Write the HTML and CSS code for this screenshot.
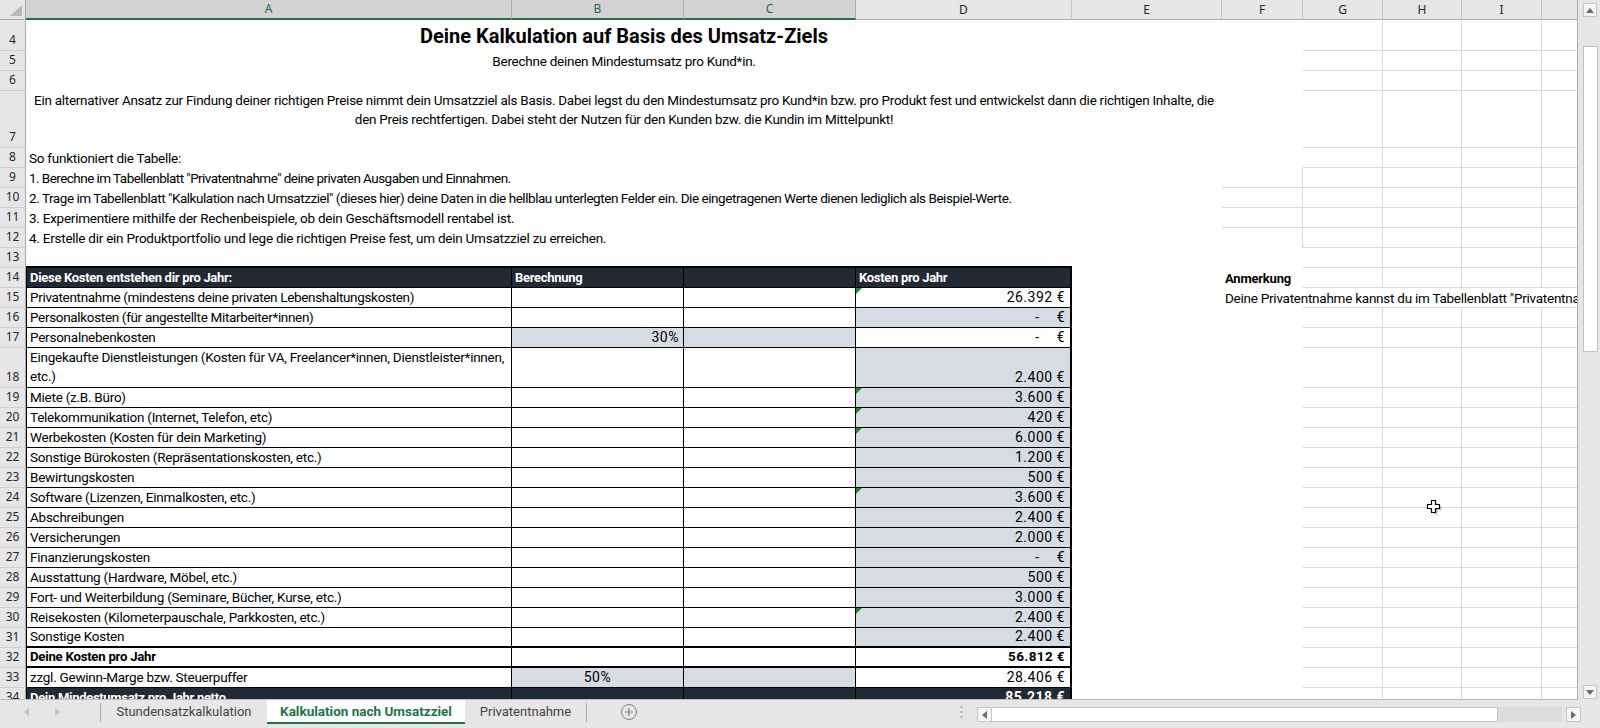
FILE: index.html
```html
<!DOCTYPE html>
<html lang="de">
<head>
<meta charset="utf-8">
<title>Kalkulation nach Umsatzziel</title>
<link rel="stylesheet" href="styles.css">
</head>
<body>
<div class="app">
  <div class="main">
    <div class="grid-wrap">
      <table class="sheet">
        <colgroup>
          <col class="c-rh"><col class="c-a"><col class="c-b"><col class="c-c"><col class="c-d"><col class="c-e"><col class="c-f"><col class="c-g"><col class="c-h"><col class="c-i"><col class="c-j">
        </colgroup>
        <tr class="hdr">
          <th class="corner"></th>
          <th class="ch sel">A</th><th class="ch sel">B</th><th class="ch sel">C</th>
          <th class="ch">D</th><th class="ch">E</th><th class="ch">F</th><th class="ch">G</th><th class="ch">H</th><th class="ch">I</th><th class="ch"></th>
        </tr>
        <tr class="r31">
          <th class="rh">4</th>
          <td class="w title" colspan="5">Deine Kalkulation auf Basis des Umsatz-Ziels</td>
          <td class="w"></td><td class="g"></td><td class="g"></td><td class="g"></td><td class="g"></td>
        </tr>
        <tr class="r20">
          <th class="rh">5</th>
          <td class="w ctr" colspan="5">Berechne deinen Mindestumsatz pro Kund*in.</td>
          <td class="w"></td><td class="g"></td><td class="g"></td><td class="g"></td><td class="g"></td>
        </tr>
        <tr class="r20">
          <th class="rh">6</th>
          <td class="w" colspan="5"></td>
          <td class="w"></td><td class="g"></td><td class="g"></td><td class="g"></td><td class="g"></td>
        </tr>
        <tr class="r57">
          <th class="rh">7</th>
          <td class="w para" colspan="5">Ein alternativer Ansatz zur Findung deiner richtigen Preise nimmt dein Umsatzziel als Basis. Dabei legst du den Mindestumsatz pro Kund*in bzw. pro Produkt fest und entwickelst dann die richtigen Inhalte, die<br>den Preis rechtfertigen. Dabei steht der Nutzen für den Kunden bzw. die Kundin im Mittelpunkt!</td>
          <td class="w"></td><td class="g"></td><td class="g"></td><td class="g"></td><td class="g"></td>
        </tr>
        <tr class="r20">
          <th class="rh">8</th>
          <td class="w" colspan="5">So funktioniert die Tabelle:</td>
          <td class="w"></td><td class="g"></td><td class="g"></td><td class="g"></td><td class="g"></td>
        </tr>
        <tr class="r20">
          <th class="rh">9</th>
          <td class="w tight1" colspan="5">1. Berechne im Tabellenblatt "Privatentnahme" deine privaten Ausgaben und Einnahmen.</td>
          <td class="g"></td><td class="g"></td><td class="g"></td><td class="g"></td><td class="g"></td>
        </tr>
        <tr class="r20">
          <th class="rh">10</th>
          <td class="w tight2" colspan="5">2. Trage im Tabellenblatt "Kalkulation nach Umsatzziel" (dieses hier) deine Daten in die hellblau unterlegten Felder ein. Die eingetragenen Werte dienen lediglich als Beispiel-Werte.</td>
          <td class="g"></td><td class="g"></td><td class="g"></td><td class="g"></td><td class="g"></td>
        </tr>
        <tr class="r20">
          <th class="rh">11</th>
          <td class="w" colspan="5">3. Experimentiere mithilfe der Rechenbeispiele, ob dein Geschäftsmodell rentabel ist.</td>
          <td class="g"></td><td class="g"></td><td class="g"></td><td class="g"></td><td class="g"></td>
        </tr>
        <tr class="r20">
          <th class="rh">12</th>
          <td class="w" colspan="5">4. Erstelle dir ein Produktportfolio und lege die richtigen Preise fest, um dein Umsatzziel zu erreichen.</td>
          <td class="gr"></td><td class="g"></td><td class="g"></td><td class="g"></td><td class="g"></td>
        </tr>
        <tr class="r20">
          <th class="rh">13</th>
          <td class="w topline" colspan="4"></td>
          <td class="w"></td><td class="w"></td><td class="g"></td><td class="g"></td><td class="g"></td><td class="g"></td>
        </tr>
        <tr class="r20">
          <th class="rh">14</th>
          <td class="t a hd">Diese Kosten entstehen dir pro Jahr:</td>
          <td class="t hd">Berechnung</td>
          <td class="t hd"></td>
          <td class="t d hd l">Kosten pro Jahr</td>
          <td class="w"></td><td class="w note-h">Anmerkung</td><td class="g"></td><td class="g"></td><td class="g"></td><td class="g"></td>
        </tr>
        <tr class="r20">
          <th class="rh">15</th>
          <td class="t a tight0">Privatentnahme (mindestens deine privaten Lebenshaltungskosten)</td>
          <td class="t"></td><td class="t"></td>
          <td class="t d num tri">26.392 €</td>
          <td class="w"></td><td class="w ovf">Deine Privatentnahme kannst du im Tabellenblatt "Privatentnahme" berechnen.</td><td class="gb"></td><td class="gb"></td><td class="gb"></td><td class="gb"></td>
        </tr>
        <tr class="r20">
          <th class="rh">16</th>
          <td class="t a tight0">Personalkosten (für angestellte Mitarbeiter*innen)</td>
          <td class="t"></td><td class="t"></td>
          <td class="t d num fill"><span class="dash">-</span>€</td>
          <td class="w"></td><td class="w"></td><td class="g"></td><td class="g"></td><td class="g"></td><td class="g"></td>
        </tr>
        <tr class="r20">
          <th class="rh">17</th>
          <td class="t a">Personalnebenkosten</td>
          <td class="t fill num r">30%</td><td class="t fill"></td>
          <td class="t d num"><span class="dash">-</span>€</td>
          <td class="w"></td><td class="w"></td><td class="g"></td><td class="g"></td><td class="g"></td><td class="g"></td>
        </tr>
        <tr class="r40">
          <th class="rh">18</th>
          <td class="t a wrap">Eingekaufte Dienstleistungen (Kosten für VA, Freelancer*innen, Dienstleister*innen,<br>etc.)</td>
          <td class="t"></td><td class="t"></td>
          <td class="t d num fill">2.400 €</td>
          <td class="w"></td><td class="w"></td><td class="g"></td><td class="g"></td><td class="g"></td><td class="g"></td>
        </tr>
        <tr class="r20">
          <th class="rh">19</th>
          <td class="t a">Miete (z.B. Büro)</td>
          <td class="t"></td><td class="t"></td>
          <td class="t d num fill tri">3.600 €</td>
          <td class="w"></td><td class="w"></td><td class="g"></td><td class="g"></td><td class="g"></td><td class="g"></td>
        </tr>
        <tr class="r20">
          <th class="rh">20</th>
          <td class="t a">Telekommunikation (Internet, Telefon, etc)</td>
          <td class="t"></td><td class="t"></td>
          <td class="t d num fill tri">420 €</td>
          <td class="w"></td><td class="w"></td><td class="g"></td><td class="g"></td><td class="g"></td><td class="g"></td>
        </tr>
        <tr class="r20">
          <th class="rh">21</th>
          <td class="t a">Werbekosten (Kosten für dein Marketing)</td>
          <td class="t"></td><td class="t"></td>
          <td class="t d num fill tri">6.000 €</td>
          <td class="w"></td><td class="w"></td><td class="g"></td><td class="g"></td><td class="g"></td><td class="g"></td>
        </tr>
        <tr class="r20">
          <th class="rh">22</th>
          <td class="t a">Sonstige Bürokosten (Repräsentationskosten, etc.)</td>
          <td class="t"></td><td class="t"></td>
          <td class="t d num fill">1.200 €</td>
          <td class="w"></td><td class="w"></td><td class="g"></td><td class="g"></td><td class="g"></td><td class="g"></td>
        </tr>
        <tr class="r20">
          <th class="rh">23</th>
          <td class="t a">Bewirtungskosten</td>
          <td class="t"></td><td class="t"></td>
          <td class="t d num fill">500 €</td>
          <td class="w"></td><td class="w"></td><td class="g"></td><td class="g"></td><td class="g"></td><td class="g"></td>
        </tr>
        <tr class="r20">
          <th class="rh">24</th>
          <td class="t a">Software (Lizenzen, Einmalkosten, etc.)</td>
          <td class="t"></td><td class="t"></td>
          <td class="t d num fill tri">3.600 €</td>
          <td class="w"></td><td class="w"></td><td class="g"></td><td class="g"></td><td class="g"></td><td class="g"></td>
        </tr>
        <tr class="r20">
          <th class="rh">25</th>
          <td class="t a">Abschreibungen</td>
          <td class="t"></td><td class="t"></td>
          <td class="t d num fill">2.400 €</td>
          <td class="w"></td><td class="w"></td><td class="g"></td><td class="g"></td><td class="g"></td><td class="g"></td>
        </tr>
        <tr class="r20">
          <th class="rh">26</th>
          <td class="t a">Versicherungen</td>
          <td class="t"></td><td class="t"></td>
          <td class="t d num fill">2.000 €</td>
          <td class="w"></td><td class="w"></td><td class="g"></td><td class="g"></td><td class="g"></td><td class="g"></td>
        </tr>
        <tr class="r20">
          <th class="rh">27</th>
          <td class="t a">Finanzierungskosten</td>
          <td class="t"></td><td class="t"></td>
          <td class="t d num fill"><span class="dash">-</span>€</td>
          <td class="w"></td><td class="w"></td><td class="g"></td><td class="g"></td><td class="g"></td><td class="g"></td>
        </tr>
        <tr class="r20">
          <th class="rh">28</th>
          <td class="t a">Ausstattung (Hardware, Möbel, etc.)</td>
          <td class="t"></td><td class="t"></td>
          <td class="t d num fill">500 €</td>
          <td class="w"></td><td class="w"></td><td class="g"></td><td class="g"></td><td class="g"></td><td class="g"></td>
        </tr>
        <tr class="r20">
          <th class="rh">29</th>
          <td class="t a">Fort- und Weiterbildung (Seminare, Bücher, Kurse, etc.)</td>
          <td class="t"></td><td class="t"></td>
          <td class="t d num fill">3.000 €</td>
          <td class="w"></td><td class="w"></td><td class="g"></td><td class="g"></td><td class="g"></td><td class="g"></td>
        </tr>
        <tr class="r20">
          <th class="rh">30</th>
          <td class="t a">Reisekosten (Kilometerpauschale, Parkkosten, etc.)</td>
          <td class="t"></td><td class="t"></td>
          <td class="t d num fill tri">2.400 €</td>
          <td class="w"></td><td class="w"></td><td class="g"></td><td class="g"></td><td class="g"></td><td class="g"></td>
        </tr>
        <tr class="r20">
          <th class="rh">31</th>
          <td class="t a bb2">Sonstige Kosten</td>
          <td class="t bb2"></td><td class="t bb2"></td>
          <td class="t d num fill bb2">2.400 €</td>
          <td class="w"></td><td class="w"></td><td class="g"></td><td class="g"></td><td class="g"></td><td class="g"></td>
        </tr>
        <tr class="r20">
          <th class="rh">32</th>
          <td class="t a bb2 strong">Deine Kosten pro Jahr</td>
          <td class="t bb2"></td><td class="t bb2"></td>
          <td class="t d num bb2 strong">56.812 €</td>
          <td class="w"></td><td class="w"></td><td class="g"></td><td class="g"></td><td class="g"></td><td class="g"></td>
        </tr>
        <tr class="r20">
          <th class="rh">33</th>
          <td class="t a">zzgl. Gewinn-Marge bzw. Steuerpuffer</td>
          <td class="t fill num ctr">50%</td><td class="t fill"></td>
          <td class="t d num">28.406 €</td>
          <td class="w"></td><td class="w"></td><td class="g"></td><td class="g"></td><td class="g"></td><td class="g"></td>
        </tr>
        <tr class="r20">
          <th class="rh">34</th>
          <td class="t a hd">Dein Mindestumsatz pro Jahr netto</td>
          <td class="t hd"></td><td class="t hd"></td>
          <td class="t d hd num">85.218 €</td>
          <td class="w"></td><td class="w"></td><td class="g"></td><td class="g"></td><td class="g"></td><td class="g"></td>
        </tr>
      </table>
    </div>
    <div class="vscroll">
      <div class="sbtn">
        <svg width="8" height="5" viewBox="0 0 8 5"><path d="M0 5 L4 0 L8 5 Z" fill="#6b6b6b"/></svg>
      </div>
      <div class="vtrack"><div class="vthumb"></div></div>
      <div class="sbtn">
        <svg width="8" height="5" viewBox="0 0 8 5"><path d="M0 0 L8 0 L4 5 Z" fill="#6b6b6b"/></svg>
      </div>
    </div>
  </div>
  <div class="tabbar">
    <div class="nav">
      <svg class="nav-l" width="5" height="8" viewBox="0 0 5 8"><path d="M5 0 L0 4 L5 8 Z" fill="#c3c3c3"/></svg>
      <svg class="nav-r" width="5" height="8" viewBox="0 0 5 8"><path d="M0 0 L5 4 L0 8 Z" fill="#c3c3c3"/></svg>
    </div>
    <div class="sep"></div>
    <div class="tab tab1">Stundensatzkalkulation</div>
    <div class="tab tab-active">Kalkulation nach Umsatzziel</div>
    <div class="tab tab3">Privatentnahme</div>
    <div class="sep"></div>
    <div class="addbtn">
      <svg width="18" height="18" viewBox="0 0 18 18"><circle cx="9" cy="9" r="7.5" fill="none" stroke="#808080" stroke-width="1"/><path d="M9 5 V13 M5 9 H13" stroke="#808080" stroke-width="1.2"/></svg>
    </div>
    <div class="dots">
      <svg width="3" height="14" viewBox="0 0 3 14"><rect x="0.5" y="1" width="2" height="2" fill="#b0b0b0"/><rect x="0.5" y="6" width="2" height="2" fill="#b0b0b0"/><rect x="0.5" y="11" width="2" height="2" fill="#b0b0b0"/></svg>
    </div>
    <div class="hscroll">
      <div class="sbtn hb">
        <svg width="5" height="8" viewBox="0 0 5 8"><path d="M5 0 L0 4 L5 8 Z" fill="#6b6b6b"/></svg>
      </div>
      <div class="hthumb"></div>
      <div class="htrack"></div>
      <div class="sbtn hb">
        <svg width="5" height="8" viewBox="0 0 5 8"><path d="M0 0 L5 4 L0 8 Z" fill="#6b6b6b"/></svg>
      </div>
    </div>
  </div>
  <svg class="cursor" width="17" height="17" viewBox="0 0 17 17">
    <path d="M6.5 2.5 H10.5 V6.5 H14.5 V10.5 H10.5 V14.5 H6.5 V10.5 H2.5 V6.5 H6.5 Z" fill="#555" opacity="0.35" transform="translate(1,1)"/>
    <path d="M5.5 1.5 H9.5 V5.5 H13.5 V9.5 H9.5 V13.5 H5.5 V9.5 H1.5 V5.5 H5.5 Z" fill="#fff" stroke="#000" stroke-width="1.2" stroke-linejoin="round"/>
  </svg>
</div>
</body>
</html>
```

FILE: styles.css
```css
* { box-sizing: border-box; }
html, body { margin: 0; padding: 0; }
body {
  width: 1600px;
  height: 728px;
  overflow: hidden;
  background: #e6e6e6;
  font-family: Roboto, "Liberation Sans", Arial, sans-serif;
  color: #000;
}
.app {
  position: relative;
  display: flex;
  flex-direction: column;
  width: 1600px;
  height: 728px;
}
.main {
  display: flex;
  height: 700px;
}
.grid-wrap {
  width: 1578px;
  height: 700px;
  overflow: hidden;
  background: #fff;
  border-right: 1px solid #ababab;
  border-bottom: 1px solid #bdbdbd;
}

/* ---------- sheet ---------- */
.sheet {
  border-collapse: separate;
  border-spacing: 0;
  table-layout: fixed;
  width: 1578px;
}
.c-rh { width: 26px; }
.c-a { width: 486px; }
.c-b { width: 172px; }
.c-c { width: 172px; }
.c-d { width: 216px; }
.c-e { width: 150px; }
.c-f { width: 81px; }
.c-g { width: 80px; }
.c-h { width: 79px; }
.c-i { width: 80px; }
.c-j { width: 36px; }

.hdr { height: 20px; }
.r20 { height: 20px; }
.r31 { height: 31px; }
.r40 { height: 40px; }
.r57 { height: 57px; }

.corner {
  position: relative;
  background: #e6e6e6;
  border-right: 1px solid #ababab;
  border-bottom: 1px solid #ababab;
  padding: 0;
}
.corner::after {
  content: "";
  position: absolute;
  right: 3px;
  bottom: 3px;
  border-left: 12px solid transparent;
  border-bottom: 11px solid #b9b9b9;
}
.ch {
  background: #e6e6e6;
  color: #262626;
  font-family: "Noto Sans", "Open Sans", sans-serif;
  font-weight: 400;
  font-size: 12px;
  line-height: 18px;
  text-align: center;
  vertical-align: middle;
  padding: 0;
  border-right: 1px solid #c4c4c4;
  border-bottom: 1px solid #ababab;
}
.ch.sel {
  background: #d2d2d2;
  color: #1e6b3f;
  border-right-color: #ababab;
  border-bottom: 2px solid #217346;
}
.rh {
  background: #e6e6e6;
  color: #262626;
  font-family: "Noto Sans", "Open Sans", sans-serif;
  font-weight: 400;
  font-size: 12px;
  line-height: 18px;
  text-align: center;
  vertical-align: bottom;
  padding: 0 0 1px 0;
  border-right: 1px solid #ababab;
  border-bottom: 1px solid #cfcfcf;
}

.sheet td {
  padding: 0 3px 1px 3px;
  white-space: nowrap;
  overflow: hidden;
  vertical-align: bottom;
  font-size: 13.5px;
  line-height: 17px;
  letter-spacing: -0.25px;
}
.sheet td.tight0 { letter-spacing: -0.33px; }
.sheet td.tight1 { letter-spacing: -0.55px; }
.sheet td.tight2 { letter-spacing: -0.45px; }
.w { background: #fff; }
.g { border-right: 1px solid #d9d9d9; border-bottom: 1px solid #d9d9d9; }
.gb { border-bottom: 1px solid #d9d9d9; }
.gr { border-right: 1px solid #d9d9d9; }
.topline { border-bottom: 2px solid #000; }

.sheet td.title {
  font-size: 20px;
  font-weight: 700;
  letter-spacing: 0;
  text-align: center;
  line-height: 24px;
  vertical-align: middle;
  padding-bottom: 0;
}
.ctr { text-align: center; }
.r { text-align: right; }
.sheet td.para {
  white-space: normal;
  text-align: center;
  vertical-align: top;
  font-size: 13.45px;
  line-height: 19px;
  padding-top: 0;
}
.sheet td.wrap { white-space: normal; line-height: 19px; }
.sheet td.ovf { overflow: visible; }
.sheet td.note-h { font-weight: 700; font-size: 13px; letter-spacing: -0.2px; }

.t {
  background: #fff;
  border-right: 1px solid #000;
  border-bottom: 1px solid #000;
}
.t.a { border-left: 1px solid #000; }
.t.d {
  position: relative;
  border-right: 2px solid #000;
  text-align: right;
  padding-right: 5px;
}
.t.d.l { text-align: left; }
.fill { background: #d6dce4; }
.sheet td.hd {
  background: #222a35;
  color: #fff;
  font-weight: 700;
  font-size: 13px;
  letter-spacing: -0.3px;
}
.bb2 { border-bottom: 2px solid #000; }
.sheet td.num { font-size: 14px; letter-spacing: 0.5px; }
.sheet td.strong { font-weight: 700; font-size: 13.2px; letter-spacing: -0.25px; }
.sheet td.num.strong { font-size: 13.5px; letter-spacing: 0.4px; }
.sheet td.num.r { padding-right: 4px; }
.dash { margin-right: 17px; }
.tri::before {
  content: "";
  position: absolute;
  left: 0;
  top: 0;
  border-top: 6px solid #1f8a2e;
  border-right: 6px solid transparent;
}

/* ---------- vertical scrollbar ---------- */
.vscroll {
  width: 22px;
  height: 700px;
  background: #e6e6e6;
  display: flex;
  flex-direction: column;
  padding: 3px 2px 1px 5px;
}
.sbtn {
  width: 14px;
  height: 14px;
  border: 1px solid #c6c6c6;
  background: #f4f4f4;
  display: flex;
  align-items: center;
  justify-content: center;
  flex: none;
}
.vtrack {
  flex: 1;
  padding-top: 29px;
  margin-bottom: 2px;
}
.vthumb {
  width: 15px;
  height: 306px;
  background: #fff;
  border: 1px solid #c2c2c2;
}

/* ---------- sheet tabs ---------- */
.tabbar {
  height: 28px;
  display: flex;
  align-items: flex-start;
  background: #e6e6e6;
  font-family: Roboto, "Liberation Sans", sans-serif;
  font-size: 13px;
  color: #444;
}
.nav {
  width: 100px;
  height: 24px;
  display: flex;
  align-items: center;
  padding-left: 24px;
  gap: 26px;
}
.sep {
  width: 1px;
  height: 19px;
  margin-top: 3px;
  background: #a8a8a8;
}
.tab {
  height: 24px;
  display: flex;
  align-items: center;
  justify-content: center;
  padding-bottom: 1px;
}
.tab1 { width: 166px; }
.tab-active {
  width: 198px;
  background: #fff;
  color: #217346;
  font-weight: 700;
  font-size: 13.5px;
  border-bottom: 2px solid #217346;
  padding-bottom: 0;
}
.tab3 { width: 121px; }
.addbtn {
  margin-left: 33px;
  margin-top: 3px;
  width: 18px;
  height: 18px;
}
.dots {
  margin-left: auto;
  margin-right: 14px;
  margin-top: 5px;
}
.hscroll {
  display: flex;
  width: 604px;
  height: 15px;
  margin-top: 7px;
  margin-right: 19px;
}
.hb { width: 15px; height: 15px; }
.hthumb {
  width: 507px;
  height: 15px;
  background: #fff;
  border: 1px solid #c6c6c6;
  border-left: none;
}
.htrack {
  width: 64px;
  height: 15px;
  background: #dcdcdc;
  margin-right: 4px;
}
.cursor {
  position: absolute;
  left: 1426px;
  top: 499px;
}
```
